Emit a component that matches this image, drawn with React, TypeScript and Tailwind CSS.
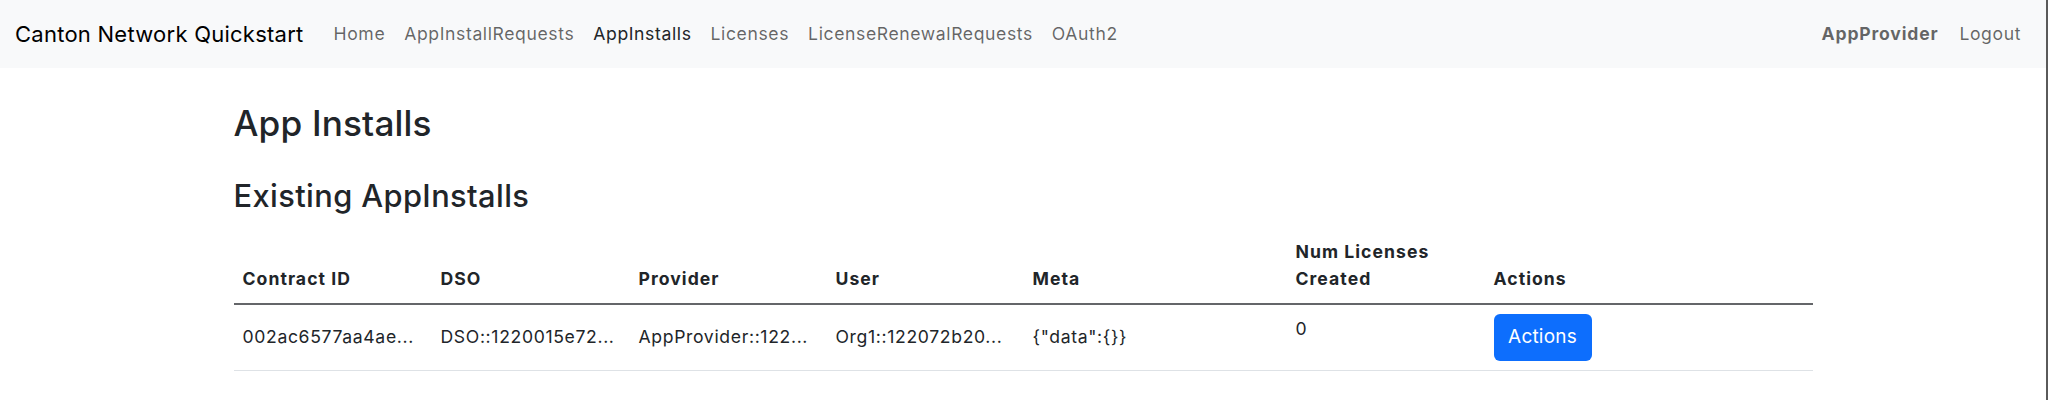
import React from "react";

const navLinks = [
  { label: "Home", active: false },
  { label: "AppInstallRequests", active: false },
  { label: "AppInstalls", active: true },
  { label: "Licenses", active: false },
  { label: "LicenseRenewalRequests", active: false },
  { label: "OAuth2", active: false },
];

const th = "border-b-2 border-[#646669] px-[9px] pt-[9px] pb-[11px] text-left font-bold tracking-[1.05px]";
const td = "border-b border-[#dee2e6] px-[9px] py-[9px] whitespace-nowrap tracking-[0.65px]";

export default function App() {
  return (
    <div
      className="h-[400px] w-full border-r-2 border-[#5a5a5a] bg-white text-[#212529]"
      style={{ fontFamily: "Inter, 'Noto Sans', 'Liberation Sans', sans-serif" }}
    >
      <nav className="flex h-[68px] items-center bg-[#f8f9fa] pl-[15px] pr-[25px]">
        <a className="text-[22px] leading-[33px] tracking-[0.25px] text-[#000000] whitespace-nowrap">
          Canton Network Quickstart
        </a>
        <div className="ml-[30px] flex items-center gap-[19px]">
          {navLinks.map((l) => (
            <a
              key={l.label}
              className={
                l.active
                  ? "text-[17.6px] leading-[26px] tracking-[0.6px] text-[#212529] whitespace-nowrap"
                  : "text-[17.6px] leading-[26px] tracking-[0.6px] text-[rgba(0,0,0,0.6)] whitespace-nowrap"
              }
            >
              {l.label}
            </a>
          ))}
        </div>
        <div className="ml-auto flex items-center gap-[21px]">
          <span className="text-[17.6px] leading-[26px] tracking-[0.8px] font-bold text-[rgba(0,0,0,0.6)]">
            AppProvider
          </span>
          <a className="text-[17.6px] leading-[26px] tracking-[0.6px] text-[rgba(0,0,0,0.6)]">Logout</a>
        </div>
      </nav>

      <main className="mx-auto w-[1579px]">
        <h2 className="mt-[34px] text-[35.2px] font-medium leading-[1.2] tracking-[0.15px]">App Installs</h2>
        <h3 className="mt-[34px] text-[30.8px] font-medium leading-[1.2] tracking-[0.4px]">Existing AppInstalls</h3>
        <table className="mt-[15px] w-[1579px] table-fixed border-collapse text-[17.6px] leading-[26.4px]">
          <colgroup>
            <col className="w-[198px]" />
            <col className="w-[198px]" />
            <col className="w-[197px]" />
            <col className="w-[197px]" />
            <col className="w-[263px]" />
            <col className="w-[198px]" />
            <col className="w-[328px]" />
          </colgroup>
          <thead>
            <tr className="align-bottom">
              <th className={th}>Contract ID</th>
              <th className={th}>DSO</th>
              <th className={th}>Provider</th>
              <th className={th}>User</th>
              <th className={th}>Meta</th>
              <th className={th}>
                Num Licenses
                <br />
                Created
              </th>
              <th className={th}>Actions</th>
            </tr>
          </thead>
          <tbody>
            <tr>
              <td className={`${td} align-middle`}>002ac6577aa4ae...</td>
              <td className={`${td} align-middle`}>DSO::1220015e72...</td>
              <td className={`${td} align-middle`}>AppProvider::122...</td>
              <td className={`${td} align-middle`}>Org1::122072b20...</td>
              <td className={`${td} align-middle`}>{'{"data":{}}'}</td>
              <td className="border-b border-[#dee2e6] px-[9px] pt-[11px] pb-[9px] align-top">0</td>
              <td className={`${td} align-middle`}>
                <button className="flex h-[47px] w-[98px] items-center justify-center rounded-[6px] bg-[#0d6efd] text-[19px] tracking-[0.2px] text-white">
                  Actions
                </button>
              </td>
            </tr>
          </tbody>
        </table>
      </main>
    </div>
  );
}
